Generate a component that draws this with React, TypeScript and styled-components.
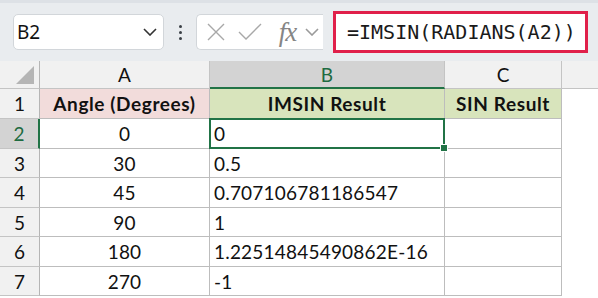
import React from 'react'
import styled, { createGlobalStyle } from 'styled-components'

const GlobalStyle = createGlobalStyle`
  html, body {
    margin: 0;
    padding: 0;
    background: #ffffff;
  }
  body {
    width: 598px;
    height: 298px;
    overflow: hidden;
    font-family: 'Lato', 'Open Sans', sans-serif;
  }
`

const Page = styled.div`
  width: 598px;
  height: 298px;
  display: flex;
  flex-direction: column;
  background: #ffffff;
`

const Toolbar = styled.div`
  height: 61px;
  display: flex;
  align-items: center;
  background: #e9ecef;
  border-top: 3px solid #dde1e6;
  box-sizing: border-box;
  padding-left: 13px;
`

const NameBox = styled.div`
  width: 151px;
  height: 36px;
  box-sizing: border-box;
  border: 1px solid #d2d6da;
  border-radius: 5px;
  background: #ffffff;
  display: flex;
  align-items: center;
  justify-content: space-between;
  padding: 0 6px 0 3px;
  font-family: 'Noto Sans', 'Open Sans', sans-serif;
  font-size: 19px;
  color: #111;
`

const Dots = styled.div`
  width: 4px;
  margin: 0 14px;
  display: flex;
  flex-direction: column;
  gap: 3px;
  align-items: center;
`

const Dot = styled.span`
  width: 3px;
  height: 3px;
  border-radius: 50%;
  background: #3a3f45;
`

const FxBox = styled.div`
  width: 127px;
  height: 36px;
  box-sizing: border-box;
  border: 1px solid #d2d6da;
  border-right: none;
  border-radius: 5px 0 0 5px;
  background: #ffffff;
  display: flex;
  align-items: center;
  padding-left: 8px;
`

const IconSlot = styled.div<{ w: number }>`
  width: ${p => p.w}px;
  display: flex;
  align-items: center;
  justify-content: center;
`

const FxText = styled.span`
  font-family: 'Liberation Serif', serif;
  font-style: italic;
  font-size: 27px;
  line-height: 1;
  color: #858585;
  letter-spacing: -1px;
`

const FormulaBox = styled.div`
  margin-left: 10px;
  width: 255px;
  height: 42px;
  box-sizing: border-box;
  border: 3px solid #e0204a;
  background: #ffffff;
  display: flex;
  align-items: center;
  padding-left: 11px;
  font-family: 'DejaVu Sans Mono', 'Liberation Mono', monospace;
  font-size: 20px;
  color: #1a1a1a;
`

const Grid = styled.div`
  display: grid;
  grid-template-columns: 40px 170px 235px 117px 1fr;
`

const ColHead = styled.div<{ active?: boolean; last?: boolean }>`
  height: 28px;
  box-sizing: border-box;
  background: ${p => (p.active ? '#d3d3d3' : '#f1f1f1')};
  color: ${p => (p.active ? '#1e6b41' : '#111')};
  border-right: ${p => (p.last ? 'none' : '1px solid #c4c4c4')};
  border-bottom: ${p => (p.active ? '2px solid #217346' : '1px solid #c4c4c4')};
  display: flex;
  align-items: center;
  justify-content: center;
  font-size: 19px;
`

const Corner = styled.div`
  height: 28px;
  box-sizing: border-box;
  background: #f1f1f1;
  border-right: 1px solid #b5b5b5;
  border-bottom: 1px solid #c4c4c4;
  display: flex;
  align-items: flex-end;
  justify-content: flex-end;
  padding: 0 5px 4px 0;
`

const Triangle = styled.div`
  width: 0;
  height: 0;
  border-left: 18px solid transparent;
  border-bottom: 18px solid #b5b5b5;
`

const RowHead = styled.div<{ active?: boolean; h: number }>`
  height: ${p => p.h}px;
  box-sizing: border-box;
  background: ${p => (p.active ? '#d3d3d3' : '#f1f1f1')};
  color: ${p => (p.active ? '#1e6b41' : '#111')};
  border-right: ${p => (p.active ? '2px solid #217346' : '1px solid #b5b5b5')};
  border-bottom: 1px solid #c4c4c4;
  display: flex;
  align-items: center;
  justify-content: center;
  font-size: 19px;
`

type Tone = 'pink' | 'green' | 'plain'

const toneBg: Record<Tone, string> = {
  pink: '#f2dcdb',
  green: '#d8e4bc',
  plain: '#ffffff',
}

const Cell = styled.div<{ h: number; tone?: Tone; bold?: boolean; align?: string; selected?: boolean }>`
  position: relative;
  height: ${p => p.h}px;
  box-sizing: border-box;
  background: ${p => toneBg[p.tone || 'plain']};
  border-right: 1px solid #bdbdbd;
  border-bottom: 1px solid #bdbdbd;
  display: flex;
  align-items: center;
  justify-content: ${p => p.align || 'flex-start'};
  padding: 0 4px;
  font-size: 19px;
  font-weight: ${p => (p.bold ? 700 : 400)};
  letter-spacing: ${p => (p.bold ? '0.6px' : '0.2px')};
  color: #111;
  white-space: nowrap;

  ${p =>
    p.selected &&
    `
    &::after {
      content: '';
      position: absolute;
      left: -1px;
      top: -1px;
      right: -1px;
      bottom: -1px;
      border: 2px solid #217346;
    }
    &::before {
      content: '';
      position: absolute;
      right: -4px;
      bottom: -4px;
      width: 6px;
      height: 6px;
      background: #217346;
      border: 1px solid #ffffff;
      z-index: 2;
    }
  `}
`

const Blank = styled.div<{ h: number }>`
  height: ${p => p.h}px;
  background: #ffffff;
`

const rows = [
  { n: 1, h: 30, a: 'Angle (Degrees)', b: 'IMSIN Result', c: 'SIN Result', header: true },
  { n: 2, h: 30, a: '0', b: '0' },
  { n: 3, h: 29, a: '30', b: '0.5' },
  { n: 4, h: 30, a: '45', b: '0.707106781186547' },
  { n: 5, h: 29, a: '90', b: '1' },
  { n: 6, h: 30, a: '180', b: '1.22514845490862E-16' },
  { n: 7, h: 29, a: '270', b: '-1' },
]

const Chevron = ({ color }: { color: string }) => (
  <svg width="14" height="8" viewBox="0 0 14 8">
    <path d="M1 1 L7 7 L13 1" fill="none" stroke={color} strokeWidth="1.6" />
  </svg>
)

export default function App() {
  return (
    <Page>
      <GlobalStyle />
      <Toolbar>
        <NameBox>
          <span>B2</span>
          <Chevron color="#333" />
        </NameBox>
        <Dots>
          <Dot />
          <Dot />
          <Dot />
        </Dots>
        <FxBox>
          <IconSlot w={22}>
            <svg width="18" height="18" viewBox="0 0 18 18">
              <path d="M1 1 L17 17 M17 1 L1 17" stroke="#a8a8a8" strokeWidth="1.4" fill="none" />
            </svg>
          </IconSlot>
          <IconSlot w={48}>
            <svg width="24" height="18" viewBox="0 0 24 18">
              <path d="M1 9 L8 16 L23 1" stroke="#a8a8a8" strokeWidth="1.4" fill="none" />
            </svg>
          </IconSlot>
          <IconSlot w={28}>
            <FxText>fx</FxText>
          </IconSlot>
          <IconSlot w={22}>
            <Chevron color="#9a9a9a" />
          </IconSlot>
        </FxBox>
        <FormulaBox>=IMSIN(RADIANS(A2))</FormulaBox>
      </Toolbar>
      <Grid>
        <Corner>
          <Triangle />
        </Corner>
        <ColHead>A</ColHead>
        <ColHead active>B</ColHead>
        <ColHead>C</ColHead>
        <ColHead last />
        {rows.map(r => (
          <React.Fragment key={r.n}>
            <RowHead h={r.h} active={r.n === 2}>
              {r.n}
            </RowHead>
            <Cell h={r.h} tone={r.header ? 'pink' : 'plain'} bold={r.header} align="center">
              {r.a}
            </Cell>
            <Cell
              h={r.h}
              tone={r.header ? 'green' : 'plain'}
              bold={r.header}
              align={r.header ? 'center' : 'flex-start'}
              selected={r.n === 2}
            >
              {r.b}
            </Cell>
            <Cell h={r.h} tone={r.header ? 'green' : 'plain'} bold={r.header} align="center">
              {r.c || ''}
            </Cell>
            <Blank h={r.h} />
          </React.Fragment>
        ))}
      </Grid>
    </Page>
  )
}
